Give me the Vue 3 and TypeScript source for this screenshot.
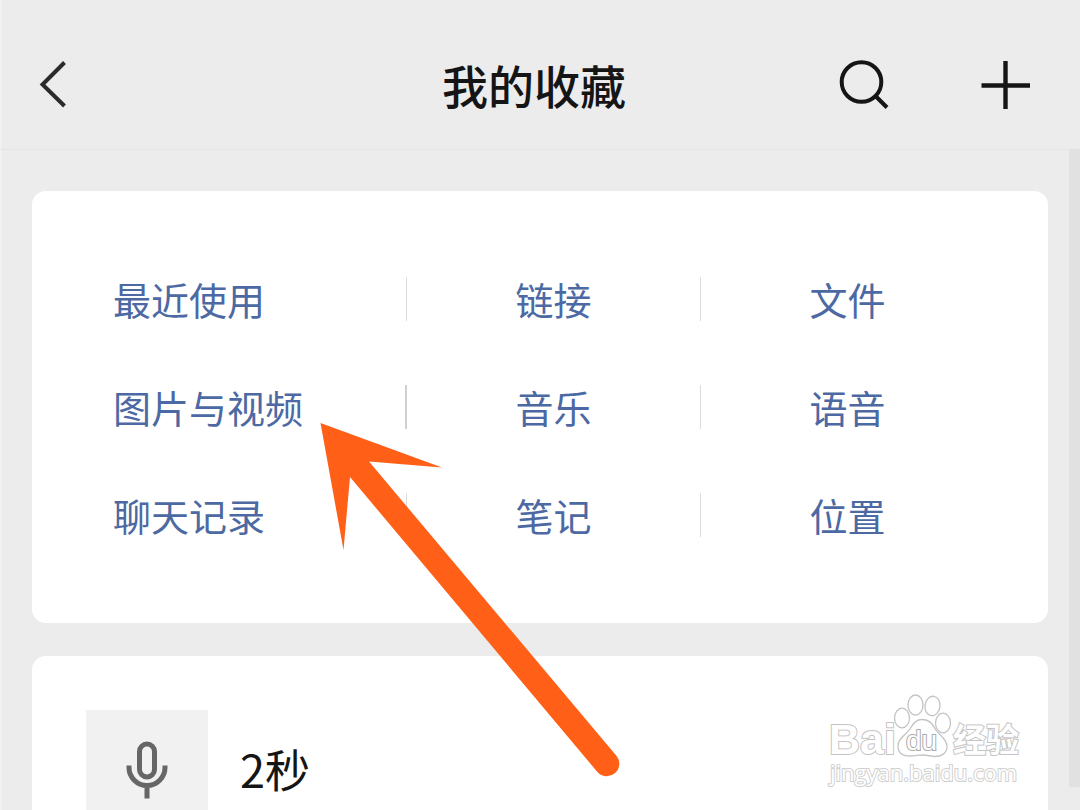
<script setup lang="ts">
interface Category {
  id: string
  label: string
  strong?: boolean
}

const categories: Category[] = [
  { id: 'recent', label: '最近使用' },
  { id: 'links', label: '链接' },
  { id: 'files', label: '文件' },
  { id: 'media', label: '图片与视频', strong: true },
  { id: 'music', label: '音乐' },
  { id: 'voice', label: '语音' },
  { id: 'chats', label: '聊天记录' },
  { id: 'notes', label: '笔记' },
  { id: 'places', label: '位置' },
]
</script>

<template>
  <div class="page">
    <header class="bar">
      <button class="icon-button" type="button" aria-label="返回">
        <svg width="48" height="56" viewBox="0 0 48 56">
          <path d="M32.500 5.500 10.500 27.500l22 21.500" fill="none" stroke="#2b2b2b" stroke-width="4" />
        </svg>
      </button>
      <h1 class="title">我的收藏</h1>
      <div class="actions">
        <button class="icon-button" type="button" aria-label="搜索">
          <svg width="56" height="56" viewBox="0 0 56 56">
            <circle cx="25.500" cy="25" r="19.800" fill="none" stroke="#151515" stroke-width="4" />
            <path d="M39.500 39 51 50.500" fill="none" stroke="#151515" stroke-width="4" />
          </svg>
        </button>
        <button class="icon-button" type="button" aria-label="添加">
          <svg width="56" height="56" viewBox="0 0 56 56">
            <path d="M27.500 4v48M3.500 28.500h48.500" fill="none" stroke="#151515" stroke-width="4.400" />
          </svg>
        </button>
      </div>
    </header>

    <main class="content">
      <nav class="card categories" aria-label="分类">
        <div v-for="item in categories" :key="item.id" class="cell" :class="{ strong: item.strong }">
          <a class="link" :href="'#' + item.id">{{ item.label }}</a>
        </div>
      </nav>

      <article class="card record">
        <div class="thumb">
          <svg width="48" height="64" viewBox="0 0 48 64">
            <rect x="16.500" y="5" width="15" height="33" rx="7.500" fill="none" stroke="#666" stroke-width="5" />
            <path d="M6 26.500v2a18 18 0 0 0 36 0v-2M24 46.500v13" fill="none" stroke="#666" stroke-width="5" />
          </svg>
        </div>
        <span class="duration">2秒</span>
      </article>
    </main>

    <div class="scroll-track"></div>

    <svg class="pointer" width="300" height="356" viewBox="0 0 300 356" aria-hidden="true">
      <path d="M.5 0 122 44.500 49 38.500 296.600 333a12.500 12.500 0 0 1-19.200 16L30 54 23.500 127Z" fill="#ff5f17" />
    </svg>

    <div class="watermark">
      <svg width="208" height="100" viewBox="0 0 208 100" role="img" aria-label="Baidu 经验">
        <text class="outlined logo" x="7" y="64">Bai</text>
        <g fill="#fff" stroke="#c4c4c4" stroke-width="1.300">
          <ellipse cx="80" cy="28" rx="7.500" ry="9.800" />
          <ellipse cx="93.500" cy="15" rx="7.500" ry="10" />
          <ellipse cx="110.500" cy="16" rx="7.500" ry="9.800" transform="rotate(8 110.500 16)" />
          <ellipse cx="121" cy="33" rx="7.500" ry="9.800" />
          <path d="M100 29.500c6 0 10 3 13 9 3 6 12 10 12 18 0 7-6 10-12 10-5 0-7-1.500-12-1.500S94 66 88 66c-7 0-12-3-12-10 0-8 8-11 12-17 3-6 6-9.500 12-9.500Z" />
        </g>
        <text class="outlined paw-text" x="84" y="60">du</text>
        <text class="outlined cn" x="131" y="62">经验</text>
        <text class="outlined site" x="8" y="91">jingyan.baidu.com</text>
      </svg>
    </div>
  </div>
</template>

<style>
body {
  margin: 0;
  background: #ececec;
}
</style>

<style scoped>
.page {
  position: relative;
  height: 100vh;
  overflow: hidden;
  box-sizing: border-box;
  background: #ececec;
  box-shadow: inset 2px 0 #f1f1f1;
  font-family: "Noto Sans CJK SC", sans-serif;
}

.bar {
  display: grid;
  grid-template-columns: 1fr auto 1fr;
  align-items: center;
  height: 150px;
  padding: 20px 46px 0 32px;
  box-sizing: border-box;
  border-bottom: 1px solid #e5e5e5;
}

.icon-button {
  display: flex;
  justify-self: start;
  padding: 0;
  border: 0;
  background: none;
  cursor: pointer;
}

.title {
  margin: 0;
  padding: 0 0 2px 2px;
  font-size: 46px;
  line-height: 64px;
  font-weight: 500;
  color: #151515;
}

.actions {
  display: flex;
  justify-content: flex-end;
  gap: 86px;
}

.content {
  display: flex;
  flex-direction: column;
  gap: 33px;
  padding: 41px 32px 0;
}

.card {
  border-radius: 14px;
  background: #fff;
}

.categories {
  display: grid;
  grid-template-columns: repeat(3, 1fr);
  row-gap: 64px;
  padding: 86px 53px 86px 81px;
}

.cell {
  display: flex;
  align-items: center;
  justify-content: center;
  height: 44px;
  border-right: 1px solid #dcdcdc;
}

.cell:nth-child(3n + 1) {
  justify-content: flex-start;
}

.cell:nth-child(3n) {
  border-right-color: transparent;
}

.cell.strong {
  border-right: 2px solid #d0d0d0;
}

.link {
  font-size: 38px;
  line-height: 44px;
  color: #4c69a3;
  text-decoration: none;
  white-space: nowrap;
}

.record {
  display: flex;
  align-items: center;
  gap: 32px;
  padding: 54px;
}

.thumb {
  display: flex;
  align-items: center;
  justify-content: center;
  width: 122px;
  height: 122px;
  background: #f1f1f1;
}

.duration {
  padding-bottom: 4px;
  font-size: 45px;
  line-height: 64px;
  color: #151515;
}

.scroll-track {
  position: absolute;
  top: 149px;
  right: 0;
  bottom: 23px;
  width: 11px;
  background: #e1e1e1;
}

.pointer {
  position: absolute;
  top: 423px;
  left: 320px;
}

.watermark {
  position: absolute;
  right: 50px;
  bottom: 20px;
  display: flex;
}

.outlined {
  fill: #fff;
  stroke: #c4c4c4;
  stroke-width: 2px;
  paint-order: stroke;
}

.logo {
  font: 700 43px "Liberation Sans", sans-serif;
}

.paw-text {
  font: 400 28px "Liberation Sans", sans-serif;
  stroke: #aaa;
}

.cn {
  font: 700 33px "Noto Sans CJK SC", sans-serif;
}

.site {
  font: 400 22px "Open Sans", sans-serif;
  stroke: #d0d0d0;
}
</style>
